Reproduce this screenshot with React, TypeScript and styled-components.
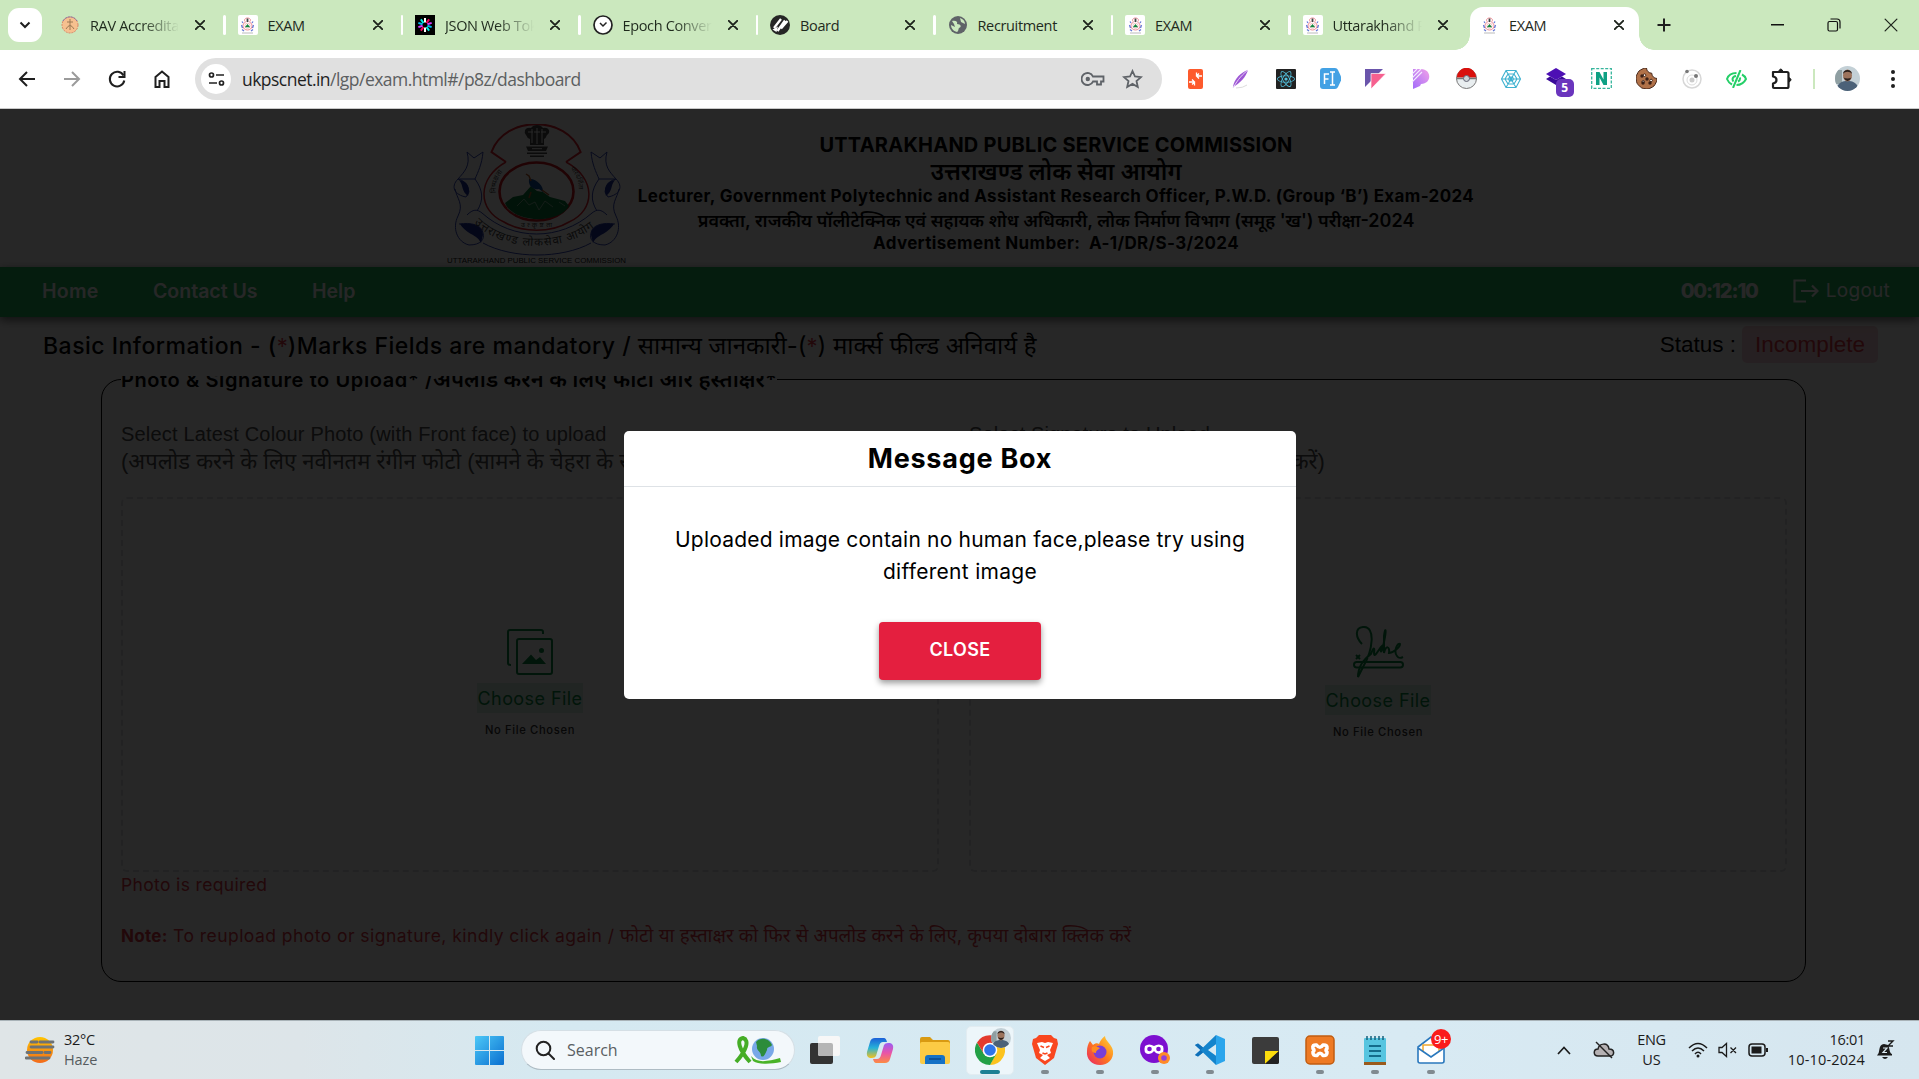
import React from "react";
import styled, { createGlobalStyle, css } from "styled-components";
import { FaReact, FaCookieBite } from "react-icons/fa";

const POPPINS = `Inter, "Noto Sans", "Noto Sans Devanagari", sans-serif`;
const ARIAL = `"Liberation Sans", "Noto Sans", sans-serif`;
const SEGOE = `"Open Sans", "Noto Sans", sans-serif`;

const GlobalStyle = createGlobalStyle`
  * { box-sizing: border-box; }
  html, body { margin: 0; padding: 0; overflow: hidden; }
  body { font-family: ${POPPINS}; background: #fff; color: #000; }
  svg { display: block; flex: none; }
`;

const Screen = styled.div`
  width: 1919px;
  height: 1079px;
  display: flex;
  flex-direction: column;
  overflow: hidden;
`;

interface TypeProps {
  $size: number;
  $weight?: number;
  $spacing?: number;
  $color?: string;
  $family?: string;
}

const Text = styled.span<TypeProps>`
  font-size: ${(p) => p.$size}px;
  font-weight: ${(p) => p.$weight ?? 400};
  letter-spacing: ${(p) => p.$spacing ?? 0}px;
  color: ${(p) => p.$color ?? "inherit"};
  ${(p) => p.$family && css`font-family: ${p.$family};`}
  white-space: pre;
`;

/* ---------- browser tab strip ---------- */

const TabStrip = styled.div`
  height: 50px;
  flex: none;
  display: flex;
  align-items: center;
  background: #cbe8be;
  padding-left: 8px;
  font-family: ${SEGOE};
`;

const TabSearch = styled.div`
  width: 34px;
  height: 34px;
  border-radius: 11px;
  background: #fff;
  display: grid;
  place-items: center;
  margin-right: 6px;
`;

const Tab = styled.div`
  width: 177.5px;
  height: 34px;
  display: flex;
  align-items: center;
  padding-left: 12px;
`;

const TabDivider = styled.i`
  width: 3px;
  height: 20px;
  border-radius: 2px;
  background: #fff;
  margin-left: 18px;
`;

const ActiveTab = styled.div`
  width: 169px;
  height: 43px;
  align-self: flex-end;
  display: flex;
  align-items: center;
  padding: 0 0 7px 9px;
  margin-left: 2px;
  border-radius: 13px 13px 0 0;
  background: #fff;
  position: relative;
  &::before, &::after {
    content: "";
    position: absolute;
    bottom: 0;
    width: 15px;
    height: 15px;
  }
  &::before { left: -15px; background: radial-gradient(circle at 0 0, transparent 14.5px, #fff 15px); }
  &::after { right: -15px; background: radial-gradient(circle at 100% 0, transparent 14.5px, #fff 15px); }
`;

const Favicon = styled.span<{ $white?: boolean }>`
  width: 20px;
  height: 20px;
  flex: none;
  display: grid;
  place-items: center;
  border-radius: 2px;
  background: ${(p) => (p.$white ? "#fff" : "transparent")};
`;

const TabTitle = styled.span<{ $fade?: boolean }>`
  width: 89px;
  flex: none;
  margin-left: 10px;
  padding-top: 1px;
  font-size: 14.5px;
  letter-spacing: -0.35px;
  line-height: 22px;
  color: #1f2a1d;
  white-space: nowrap;
  overflow: hidden;
  ${(p) => p.$fade && css`mask-image: linear-gradient(90deg, #000 58%, transparent 100%);`}
`;

const CloseSlot = styled.span`
  margin-left: 16px;
  display: grid;
`;

const NewTab = styled.span`
  margin-left: 18px;
  width: 16px;
`;

const WindowButtons = styled.div`
  margin-left: auto;
  width: 170px;
  display: flex;
  align-items: center;
  justify-content: space-between;
  padding: 0 21px 0 22px;
`;

/* ---------- toolbar ---------- */

const Toolbar = styled.div`
  height: 59px;
  flex: none;
  display: flex;
  align-items: center;
  background: #fff;
  border-bottom: 1px solid #c9c9c9;
  padding: 0 0 1px 15px;
  font-family: ${SEGOE};
`;

const NavIcons = styled.div`
  display: flex;
  gap: 21px;
  margin-right: 21px;
`;

const Omnibox = styled.div`
  width: 967px;
  height: 42px;
  border-radius: 21px;
  background: #e0e0e0;
  display: flex;
  align-items: center;
  padding: 0 19px 0 6px;
`;

const SiteInfo = styled.span`
  width: 30px;
  height: 30px;
  border-radius: 50%;
  background: #fff;
  display: grid;
  place-items: center;
  margin-right: 11px;
`;

const OmniActions = styled.span`
  margin-left: auto;
  display: flex;
  align-items: center;
  gap: 17px;
`;

const Extensions = styled.div`
  display: flex;
  margin-left: 11px;
`;

const ExtSlot = styled.span`
  width: 45.1px;
  height: 40px;
  display: grid;
  place-items: center;
  position: relative;
`;

const ExtBadge = styled.b`
  position: absolute;
  left: 22px;
  top: 20px;
  width: 18px;
  height: 18px;
  border-radius: 5px;
  background: #6a35bd;
  color: #fff;
  font-size: 12px;
  line-height: 18px;
  text-align: center;
`;

const ToolbarEnd = styled.div`
  display: flex;
  align-items: center;
  gap: 20px;
  margin-left: 9px;
`;

const EndRule = styled.i`
  width: 2px;
  height: 20px;
  background: #cbe8be;
`;

/* ---------- web page ---------- */

const Page = styled.main`
  height: 911px;
  flex: none;
  position: relative;
  display: flex;
  flex-direction: column;
  background: #fff;
  overflow: hidden;
`;

const Banner = styled.header`
  height: 158px;
  flex: none;
  display: flex;
  padding: 15px 0 0 447px;
`;

const BannerText = styled.div`
  width: 838px;
  margin-left: 10px;
  padding-top: 7px;
  display: flex;
  flex-direction: column;
  align-items: center;
`;

const BannerLine = styled.div<{ $h: number }>`
  height: ${(p) => p.$h}px;
  display: flex;
  align-items: center;
  justify-content: center;
`;

const NavBar = styled.nav`
  height: 50px;
  flex: none;
  display: flex;
  align-items: center;
  padding: 0 29px 3px 42px;
  background: #20b45f;
  color: #fff;
  box-shadow: 0 3px 9px rgba(0, 0, 0, 0.6);
  z-index: 1;
`;

const NavItem = styled.span<{ $w: number }>`
  width: ${(p) => p.$w}px;
  flex: none;
`;

const NavRight = styled.div`
  margin-left: auto;
  display: flex;
  align-items: center;
`;

const TitleRow = styled.div`
  height: 59px;
  flex: none;
  display: flex;
  justify-content: space-between;
  align-items: center;
  padding: 0 41px 4px 43px;
`;

const Status = styled.div`
  display: flex;
  align-items: center;
  gap: 6px;
`;

const StatusTag = styled.span`
  width: 136px;
  height: 37px;
  border-radius: 5px;
  background: #f8d3da;
  display: grid;
  place-items: center;
`;

const Scroller = styled.section`
  flex: 1;
  min-height: 0;
  overflow: hidden;
  background: #fafafa;
  padding: 0 76px;
`;

const Sheet = styled.div`
  height: 100%;
  background: #fff;
  padding: 3px 37px 0 25px;
`;

const Fieldset = styled.div`
  height: 603px;
  border: 1px solid #000;
  border-radius: 20px;
  padding: 0 19px;
`;

const Legend = styled.div`
  width: fit-content;
  height: 26px;
  line-height: 27px;
  margin-top: -14px;
  background: #fff;
`;

const Columns = styled.div`
  display: grid;
  grid-template-columns: 818px 818px;
  gap: 30px;
  margin-top: 28px;
`;

const FieldLabel = styled.div`
  height: 57px;
  line-height: 28px;
  color: #4d4d4d;
`;

const LabelLine = styled.div`
  height: 28px;
`;

const DropZone = styled.div<{ $top: number }>`
  margin-top: 20px;
  height: 375px;
  border: 2px dashed #dcdfe3;
  border-radius: 6px;
  display: flex;
  flex-direction: column;
  align-items: center;
  padding-top: ${(p) => p.$top}px;
`;

const ChooseWrap = styled.div<{ $gap: number }>`
  margin-top: ${(p) => p.$gap}px;
  display: flex;
  flex-direction: column;
  align-items: center;
`;

const ChooseTag = styled.span`
  width: 106px;
  height: 30px;
  background: #d9f0e5;
  display: grid;
  place-items: center;
`;

const NoFile = styled.div`
  margin-top: 6px;
  height: 18px;
  line-height: 18px;
`;

const ErrorLine = styled.div`
  height: 28px;
  line-height: 26px;
`;

const NoteLine = styled.div`
  margin-top: 23px;
  height: 28px;
  line-height: 26px;
`;

const Overlay = styled.div`
  position: absolute;
  inset: 0;
  background: rgba(0, 0, 0, 0.846);
  z-index: 2;
`;

const Dialog = styled.div`
  position: absolute;
  left: 624px;
  top: 322px;
  width: 672px;
  height: 268px;
  border-radius: 5px;
  background: #fff;
  z-index: 3;
  display: flex;
  flex-direction: column;
  align-items: center;
`;

const DialogTitle = styled.div`
  width: 100%;
  height: 56px;
  border-bottom: 1px solid #dee2e6;
  display: grid;
  place-items: center;
`;

const DialogBody = styled.div`
  margin-top: 37px;
  display: flex;
  flex-direction: column;
  align-items: center;
  line-height: 32px;
`;

const CloseButton = styled.button`
  margin-top: 34px;
  width: 162px;
  height: 58px;
  border: 0;
  border-radius: 4px;
  background: #e41f3f;
  color: #fff;
  font-family: inherit;
  box-shadow: 0 3px 6px rgba(0, 0, 0, 0.4);
  padding-bottom: 4px;
`;

/* ---------- taskbar ---------- */

const Taskbar = styled.footer`
  height: 59px;
  flex: none;
  display: flex;
  align-items: center;
  border-top: 1px solid #a9b3b8;
  background: linear-gradient(90deg, #dfe5e7 0, #dde5e9 300px, #d5e9f1 560px, #d8eaf3 1400px, #d6e6ef 1919px);
  font-family: ${SEGOE};
  color: #1b1b1b;
`;

const Weather = styled.div`
  width: 450px;
  display: flex;
  align-items: center;
  gap: 8px;
  margin-left: 25px;
  line-height: 20px;
`;

const Stack = styled.div<{ $align?: string }>`
  display: flex;
  flex-direction: column;
  align-items: ${(p) => p.$align ?? "flex-start"};
  line-height: 20px;
`;

const SearchBox = styled.div`
  width: 274px;
  height: 40px;
  margin-left: 17px;
  border-radius: 20px;
  background: #f3f8fb;
  border: 1px solid #d5dfe5;
  border-bottom-color: #aebcc4;
  display: flex;
  align-items: center;
  padding: 0 11px 0 13px;
`;

const SearchWord = styled.span`
  margin-left: 12px;
  font-size: 16px;
  letter-spacing: 0;
  color: #5a5f63;
  flex: 1;
`;

const Apps = styled.div`
  display: flex;
  margin-left: 2px;
`;

const AppSlot = styled.span<{ $active?: boolean; $dot?: boolean }>`
  width: 55.1px;
  height: 58px;
  display: grid;
  place-items: center;
  position: relative;
  ${(p) =>
    p.$dot &&
    css`
      &::after {
        content: "";
        position: absolute;
        bottom: 5px;
        left: calc(50% - ${p.$active ? 10 : 4}px);
        width: ${p.$active ? 20 : 8}px;
        height: 4px;
        border-radius: 2px;
        background: ${p.$active ? "#1c8094" : "#808a90"};
      }
    `}
  ${(p) =>
    p.$active &&
    css`
      &::before {
        content: "";
        position: absolute;
        inset: 5px 3px 4px 4px;
        border-radius: 5px;
        background: #edf6fa;
        border: 1px solid #e2ecf1;
      }
    `}
`;

const MailBadge = styled.span`
  position: absolute;
  left: 28px;
  top: 8px;
  width: 20px;
  height: 20px;
  border-radius: 50%;
  background: #fa1b1b;
  color: #fff;
  font-size: 13px;
  line-height: 20px;
  text-align: center;
  letter-spacing: -0.5px;
`;

const Tray = styled.div`
  margin-left: auto;
  display: flex;
  align-items: center;
  padding-right: 24px;
`;

const TraySlot = styled.span<{ $l: number }>`
  margin-left: ${(p) => p.$l}px;
`;

/* ---------- drawings ---------- */

const Emblem = ({ w, h }: { w: number; h: number }) => (
  <svg width={w} height={h} viewBox="0 0 180 140" preserveAspectRatio="none" fill="none">
    <path d="M59 38 L44.500 28 C58 -9 120 -9 133.600 28 L119 38" stroke="#e0232e" strokeWidth="2" />
    <path d="M59 38 C30 54 30 86 57 98 C75 109 104 109 122 98 C149 86 149 54 119 38" stroke="#e0232e" strokeWidth="1.500" />
    <ellipse cx="89.500" cy="67.500" rx="37" ry="29" stroke="#d0141e" strokeWidth="2.600" />
    <path d="M58 79 L66 73 L76 71 L84 62 L90 67 L96 68 L103 73 L118 77 L122 82 C113 100 66 100 58 79Z" fill="#0a7a3c" />
    <path d="M70 82 l7 -7 l5 6 l6 -3 l4 8 l6 -9 l8 6 M60 84 l8 6 M112 78 l6 4" stroke="#9fc7ae" strokeWidth=".8" />
    <path d="M82 55 C89 54 97 62 96 68 L92 65 C86 66 81 62 82 55Z" fill="#0f4fa0" />
    <path d="M79 50 l3 2 l2 5 M95 66 l7 5 M84 68 l-2 6" stroke="#b55a28" strokeWidth="1.500" />
    <g fill="#4a4a4a">
      <path d="M78 6 Q80 3 84 4 Q86 1 90 1 Q94 1 96 4 Q100 3 102 6 Q103 9 100 11 Q99 14 97 15 L97 21 H83 L83 15 Q80 14 79 11 Q77 9 78 6Z" />
      <path d="M79 22.500 H101 L99 27 H81Z M80 28.500 H100 V30 H80Z M83 31.500 H97 V33 H83Z" />
    </g>
    <path d="M85 5 V19 M90 4 V20 M95 5 V19 M81 8 h5 M94 8 h5 M87 8 h6 M85 24.700 h10" stroke="#fff" strokeWidth="1" />
    <g stroke="#3346b8" strokeWidth="1">
      <path d="M20 28 L27 34 L36 28 C35 40 31 48 28 55 L11 55 C17 48 24 42 20 28Z M28 55 C36 66 37 76 30 87 M11 55 C3 63 8 71 19 73 L22 68 C21 62 19 57 11 55 M8 65 C10 75 17 80 11 92 C5 104 10 118 22 121 C34 121 38 115 36 109 C35 101 24 98 12 100" />
      <path d="M160 28 L153 34 L144 28 C145 40 149 48 152 55 L169 55 C163 48 156 42 160 28Z M152 55 C144 66 143 76 150 87 M169 55 C177 63 172 71 161 73 L158 68 C159 62 161 57 169 55 M172 65 C170 75 163 80 169 92 C175 104 170 118 158 121 C146 121 142 115 144 109 C145 101 156 98 168 100" />
      <path d="M20 91 C26 85 30 85 35 89 C66 117 113 117 145 89 C150 85 154 85 160 91" />
      <path d="M36 119 C65 135 115 135 144 119" />
    </g>
    <path d="M12 56 C20 57 24 63 21 72 C14 67 17 62 12 56Z M168 56 C160 57 156 63 159 72 C166 67 163 62 168 56Z M13 100 C26 98 36 102 36 111 L34 119 C30 110 20 111 13 100Z M167 100 C154 98 144 102 144 111 L146 119 C150 110 160 111 167 100Z" fill="#1c2f9c" />
    <defs>
      <path id="motto" d="M27 99 C57 130 123 130 154 97" />
      <path id="left-word" d="M49 69 C48 60 51 52 59 44" />
      <path id="right-word" d="M123 45 C131 53 133 61 131 72" />
    </defs>
    <g fill="#444" fontFamily={POPPINS}>
      <text fontSize="11.500"><textPath href="#motto" textLength="130">उत्तराखण्ड लोकसेवा आयोग</textPath></text>
      <text fontSize="7"><textPath href="#left-word">निष्पक्षता</textPath></text>
      <text fontSize="6.500"><textPath href="#right-word">पारदर्शिता</textPath></text>
      <text x="74" y="103" fontSize="7" textLength="31">उत्कृष्टता</text>
      <text x="0" y="138.500" fontSize="6.500" textLength="179" lengthAdjust="spacingAndGlyphs" fontFamily={ARIAL} fill="#222">UTTARAKHAND PUBLIC SERVICE COMMISSION</text>
    </g>
  </svg>
);

const MiniEmblem = () => (
  <svg width="17" height="17" viewBox="0 0 17 17" fill="none">
    <path d="M8.500 1 C5 1 5 4 6.500 5 C2.500 7 3.500 13 8.500 13 C13.500 13 14.500 7 10.500 5 C12 4 12 1 8.500 1Z" stroke="#f08a94" strokeWidth="1" />
    <path d="M8.500 1.500 V5" stroke="#444" strokeWidth="1.800" />
    <circle cx="8.500" cy="8.800" r="2.600" fill="#fff" stroke="#eda0a0" strokeWidth=".6" />
    <path d="M5.800 10.200 L8.500 7 L11.200 10.200Z" fill="#12843d" />
    <path d="M3 4.500 L4 6 M14 4.500 L13 6 M2.500 8 L3.500 11 M14.500 8 L13.500 11 M3 12.500 L5 14 M14 12.500 L12 14" stroke="#6478d6" strokeWidth="1.300" />
    <path d="M3 16 H14" stroke="#aaa" strokeWidth=".8" />
  </svg>
);

const Cross = ({ s = 10, w = 1.9 }: { s?: number; w?: number }) => (
  <svg width={s} height={s} viewBox="0 0 10 10" stroke="#1d231c" strokeWidth={w} strokeLinecap="round"><path d="M.8 .8 L9.200 9.200 M9.200 .8 L.8 9.200" /></svg>
);

const RavIcon = () => (
  <svg width="18" height="18" viewBox="0 0 18 18" fill="none">
    <circle cx="9" cy="9" r="8" fill="#f6c08f" stroke="#d88768" strokeDasharray="2 1" />
    <path d="M2 5 A8 8 0 0 1 16 5" stroke="#7b63a6" strokeDasharray="2 1" />
    <path d="M9 3 V14 M6 6 h6 M5 13 q4 -7 8 0" stroke="#9c7a54" />
  </svg>
);

const JwtIcon = () => (
  <svg width="20" height="20" viewBox="0 0 20 20">
    <rect width="20" height="20" fill="#000" />
    <g strokeWidth="2" transform="translate(10 10)">
      {["#fff", "#fb015b", "#d63aff", "#00b9f1", "#00f2e6", "#fff", "#fb015b", "#d63aff", "#00b9f1", "#00f2e6"].map((c, i) => (
        <path key={i} d="M0 -2.500 V-7" stroke={c} transform={`rotate(${i * 36})`} />
      ))}
    </g>
  </svg>
);

const ClockIcon = () => (
  <svg width="20" height="20" viewBox="0 0 20 20" fill="none" stroke="#222"><circle cx="10" cy="10" r="9" fill="#fff" strokeWidth="1.700" /><path d="M7 8 L10 11 L13.500 7.500" strokeWidth="1.500" /></svg>
);

const BoardIcon = () => (
  <svg width="20" height="20" viewBox="0 0 20 20"><circle cx="10" cy="10" r="10" fill="#262626" /><path d="M4 13 L11 4 M7.500 16 L15 5.500 M11 13.500 L17.500 6" stroke="#fff" strokeWidth="2.300" /><path d="M2.500 14.500 L8 11.500 L6.500 17Z" fill="#fff" /></svg>
);

const GlobeIcon = () => (
  <svg width="18" height="18" viewBox="0 0 18 18"><circle cx="9" cy="9" r="9" fill="#5f6368" /><path d="M3 5 C7 4 9 6 8 8 C12 8 13 11 10 12 C9 13 10 15 8 16 C4 15 2 12 2 9 L6 11 L5 8Z M11 2 C14 3 16 5 16 8 L12 6Z" fill="#cbe8be" /></svg>
);

const Avatar = ({ s }: { s: number }) => (
  <svg width={s} height={s} viewBox="0 0 25 25">
    <clipPath id={`face${s}`}><circle cx="12.500" cy="12.500" r="12.500" /></clipPath>
    <g clipPath={`url(#face${s})`}>
      <rect width="25" height="25" fill="#c3d0d6" />
      <path d="M0 4 h7 v14 h-7z" fill="#8f9fa2" />
      <path d="M1 25 C2 16 8 15 12.500 15 C17 15 23 16 24 25Z" fill="#4b6178" />
      <ellipse cx="12.500" cy="9.500" rx="4.500" ry="6" fill="#9c735c" />
      <path d="M8 8 C8 2.500 17 2.500 17 8 C15 5 10 5 8 8Z M8.500 11.500 q4 7 8 0 q-4 2 -8 0z" fill="#2b211d" />
    </g>
  </svg>
);

const BackIcon = ({ color = "#1f1f1f", flip = false }: { color?: string; flip?: boolean }) => (
  <svg width="24" height="24" viewBox="0 0 24 24" fill="none" stroke={color} strokeWidth="2" transform={flip ? "scale(-1 1)" : undefined}><path d="M20 12 H5.500 M12 5 L5 12 L12 19" /></svg>
);

const extIcons: React.ReactNode[] = [
  <svg width="15" height="20" viewBox="0 0 15 20"><rect width="15" height="20" rx="2" fill="#fd5a2c" /><path d="M14 7 H8.500 M11 4.500 L8.500 7 L11 9.500 M8.500 7 V3.500 M1 13 H6.500 M4 10.500 L6.500 13 L4 15.500 M6.500 13 V16.500" stroke="#fff" strokeWidth="1.300" fill="none" /></svg>,
  <svg width="18" height="20" viewBox="0 0 18 20"><path d="M1 18 C2 10 9 3 16 1 C14 8 8 14 1 18Z" fill="#9d57d5" /><path d="M1 19 C6 10 11 5 16 1" stroke="#e9d4f6" strokeWidth="1" fill="none" /><path d="M4 19 Q11 19 15 16" stroke="#ddd" fill="none" /></svg>,
  <svg width="20" height="20" viewBox="0 0 20 20"><rect width="20" height="20" rx="1" fill="#222" /><FaReact x="1" y="1" size={18} color="#53c1de" /></svg>,
  <svg width="21" height="21" viewBox="0 0 21 21"><path d="M3 0 H15 Q17 0 18 2 L21 8.500 V12.500 L18 19 Q17 21 15 21 H3 Q0 21 0 18 V3 Q0 0 3 0Z" fill="#43a1e4" /><path d="M4.500 16 V6 H9 M4.500 11 H8.500 M10 4 H15 M12.500 4 V17 M10 17 H15" stroke="#fff" strokeWidth="1.500" fill="none" /></svg>,
  <svg width="21" height="20" viewBox="0 0 21 20"><path d="M0 0 H18 L0 18Z" fill="#6a55ab" /><path d="M6 4.500 H21 L6 20Z" fill="#f6608f" stroke="#fff" strokeWidth=".7" /></svg>,
  <svg width="18" height="20" viewBox="0 0 18 20"><defs><linearGradient id="pg" x1="0" y1="1" x2="1" y2="0"><stop stopColor="#a26cfa" /><stop offset="1" stopColor="#f2a1e8" /></linearGradient></defs><path d="M1 0 H9 C20 0 20 15 9 15 L8 17 L1 20Z" fill="url(#pg)" /><path d="M0 5 L5 0 M0 9 L9 0 M0 13 L10 3" stroke="#f3ebff" strokeWidth="1.200" /></svg>,
  <svg width="21" height="21" viewBox="0 0 21 21"><circle cx="10.500" cy="10.500" r="10" fill="#e9eef0" stroke="#777" /><path d="M.8 9.500 A9.700 9.700 0 0 1 20.200 9.500Z" fill="#d9100c" /><path d="M.5 10.500 h20" stroke="#777" strokeWidth="1.500" /><circle cx="10.500" cy="10.500" r="3" fill="#ccd4d6" stroke="#667" strokeWidth="1" /></svg>,
  <svg width="20" height="20" viewBox="0 0 20 20" fill="none" stroke="#3fb2d0" strokeWidth="1.100"><path d="M5 1.500 H15 L19.500 10 L15 18.500 H5 L.5 10Z M7 5 H13 L16 10 L13 15 H7 L4 10Z M8.500 8 h3 l1 2 l-1 2 h-3 l-1 -2z M5 1.500 L15 18.500 M15 1.500 L5 18.500 M.5 10 H19.500" /></svg>,
  <><svg width="22" height="22" viewBox="0 0 22 22"><path d="M11 0 L21 6 L11 12 L1 6Z" fill="#4d0fb4" /><path d="M1 11 L5 8.500 L11 12 L17 8.500 L21 11 L11 17Z" fill="#3a0a99" /></svg><ExtBadge>5</ExtBadge></>,
  <svg width="21" height="21" viewBox="0 0 21 21" fill="none"><rect x=".7" y=".7" width="19.600" height="19.600" stroke="#36b59c" strokeWidth="1.300" strokeDasharray="3 1.500" /><path d="M5 17 V4 H8.500 L12.500 11.500 V4 H16 V17 H12.500 L8.500 9.500 V17Z" fill="#0ea083" /></svg>,
  <svg width="21" height="21" viewBox="0 0 21 21"><FaCookieBite size={21} color="#b07148" stroke="#432416" strokeWidth={24} /><g fill="#3b2016"><circle cx="6" cy="8" r="1.700" /><circle cx="11" cy="11" r="1.700" /><circle cx="7" cy="15" r="1.700" /><circle cx="14" cy="15" r="1.700" /></g></svg>,
  <svg width="20" height="20" viewBox="0 0 20 20" fill="none"><circle cx="10" cy="10" r="9" stroke="#d7d7d7" strokeWidth="1.500" /><circle cx="10" cy="11" r="5" stroke="#dcdcdc" /><circle cx="10" cy="11" r="2.500" fill="#ccc" /><circle cx="5" cy="2.500" r="1.800" fill="#777" /><circle cx="14" cy="7" r="2" fill="#777" /></svg>,
  <svg width="21" height="18" viewBox="0 0 21 18" fill="none" stroke="#25cf68" strokeWidth="2"><path d="M10.500 3 C5 3 2 6 1 9 C2 11.500 4 13.500 6 14.500 M16 4.500 C18 5.500 19.500 7.500 20 9 C18 13 15 15 10.500 15 M14.500 0 L7 18 M10 6 C6 6.500 6 10 7.500 11.500 M14 7.500 q.5 3 -2 4" /></svg>,
];

const Puzzle = () => (
  <svg width="23" height="23" viewBox="0 0 23 23" fill="none" stroke="#1f1f1f" strokeWidth="2.200" strokeLinejoin="round"><path d="M3 5 H17 Q18.500 5 18.500 6.500 V19.500 Q18.500 21 17 21 H4 Q3 21 3 20 V16.500 Q6.500 16 6.500 13 Q6.500 10 3 9.500Z" /><path d="M8.500 4.500 q2.300 -5 4.600 0z M18.800 10.500 q4.500 2.200 0 4.600z" fill="#1f1f1f" strokeWidth="1" /></svg>
);

const ChromeMark = styled.svg`
  z-index: 1;
`;

const ChromeLogo = () => (
  <ChromeMark width="30" height="30" viewBox="0 0 30 30">
    <path d="M28 7.500 A15 15 0 0 1 15 30 L21 18.500 L15 8Z" fill="#fcc31e" />
    <path d="M2 7.500 A15 15 0 0 0 15 30 L21.500 18.500 L9 19Z" fill="#23a046" />
    <path d="M2 7.500 L9 19 L15 8 H28 A15 15 0 0 0 2 7.500Z" fill="#e33b2e" />
    <circle cx="15" cy="15" r="7.300" fill="#fff" /><circle cx="15" cy="15" r="5.800" fill="#2f74ea" />
  </ChromeMark>
);

const ChromeAvatar = styled.span`
  position: absolute;
  left: 29px;
  top: 7px;
  z-index: 2;
`;

const WorldRibbon = () => (
  <svg width="50" height="28" viewBox="0 0 50 28" fill="none">
    <circle cx="30" cy="13" r="11" fill="#78a8e8" /><path d="M23 6 C28 0 37 3 39 9 C37 12 34 10 34 14 C32 18 31 22 28 20 C28 15 23 15 24 10Z" fill="#2c8c3b" />
    <path d="M3 26 C13 15 17 4 10 2 C3 3 6 14 17 26" stroke="#45ad26" strokeWidth="4" />
    <path d="M18 20 C25 28 35 25 47 22 L48 26 C38 28 27 29 20 25" fill="#49b328" />
  </svg>
);

const tabs = [
  { title: "RAV Accreditation", icon: <RavIcon />, fade: true },
  { title: "EXAM", icon: <MiniEmblem />, white: true },
  { title: "JSON Web Tokens", icon: <JwtIcon />, fade: true },
  { title: "Epoch Converter", icon: <ClockIcon />, fade: true },
  { title: "Board", icon: <BoardIcon /> },
  { title: "Recruitment", icon: <GlobeIcon /> },
  { title: "EXAM", icon: <MiniEmblem />, white: true },
  { title: "Uttarakhand Public", icon: <MiniEmblem />, white: true, fade: true },
];

const ChooseBlock = ({ gap }: { gap: number }) => (
  <ChooseWrap $gap={gap}>
    <ChooseTag><Text $size={18} $spacing={0.43} $color="#0a8a42">Choose File</Text></ChooseTag>
    <NoFile><Text $size={11.2} $weight={500} $spacing={0.65} $color="#333">No File Chosen</Text></NoFile>
  </ChooseWrap>
);

export default function App() {
  return (
    <Screen>
      <GlobalStyle />
      <TabStrip>
        <TabSearch>
          <svg width="12" height="8" viewBox="0 0 12 8" fill="none" stroke="#1f1f1f" strokeWidth="2"><path d="M1.500 1.500 L6 6 L10.500 1.500" /></svg>
        </TabSearch>
        {tabs.map((t, i) => (
          <Tab key={i}>
            <Favicon $white={t.white}>{t.icon}</Favicon>
            <TabTitle $fade={t.fade}>{t.title}</TabTitle>
            <CloseSlot><Cross /></CloseSlot>
            {i < 7 && <TabDivider />}
          </Tab>
        ))}
        <ActiveTab>
          <Favicon><MiniEmblem /></Favicon>
          <TabTitle>EXAM</TabTitle>
          <CloseSlot><Cross /></CloseSlot>
        </ActiveTab>
        <NewTab><svg width="14" height="14" viewBox="0 0 14 14" stroke="#1f1f1f" strokeWidth="2"><path d="M7 .5 V13.500 M.5 7 H13.500" /></svg></NewTab>
        <WindowButtons>
          <svg width="13" height="2" viewBox="0 0 13 2"><rect width="13" height="1.500" fill="#111" /></svg>
          <svg width="14" height="14" viewBox="0 0 14 14" fill="none" stroke="#111" strokeWidth="1.200"><rect x="1" y="3.500" width="9.500" height="9.500" rx="1.500" /><path d="M3.500 1 H10 Q13 1 13 4 V10.500" /></svg>
          <Cross s={14} w={0.9} />
        </WindowButtons>
      </TabStrip>

      <Toolbar>
        <NavIcons>
          <BackIcon />
          <BackIcon color="#9b9b9b" flip />
          <svg width="24" height="24" viewBox="0 0 24 24" fill="none" stroke="#1f1f1f" strokeWidth="2"><path d="M18.500 8.500 A7.300 7.300 0 1 0 19.300 13.500" /><path d="M19.500 4 V10 H13.500" /></svg>
          <svg width="24" height="24" viewBox="0 0 24 24" fill="none" stroke="#1f1f1f" strokeWidth="2"><path d="M5.500 10 L12 4.500 L18.500 10 V20 H14.500 V14 H9.500 V20 H5.500Z" /></svg>
        </NavIcons>
        <Omnibox>
          <SiteInfo>
            <svg width="17" height="14" viewBox="0 0 17 14" fill="none" stroke="#222" strokeWidth="1.700"><circle cx="3.500" cy="3" r="2" /><path d="M8 3 H16 M1 11 H9" /><circle cx="13.500" cy="11" r="2" /></svg>
          </SiteInfo>
          <Text $size={17.5} $spacing={-0.53} $color="#5c5f61"><Text $size={17.5} $spacing={-0.53} $color="#1f1f1f">ukpscnet.in</Text>/lgp/exam.html#/p8z/dashboard</Text>
          <OmniActions>
            <svg width="24" height="16" viewBox="0 0 24 16" fill="none" stroke="#5f6368" strokeWidth="1.800"><path d="M12 5.500 A6 6 0 1 0 12 10.500 H16 V13.500 H20 V10.500 H22.500 V5.500Z" /><circle cx="6.800" cy="8" r="2.200" fill="#5f6368" stroke="none" /></svg>
            <svg width="21" height="20" viewBox="0 0 21 20" fill="none" stroke="#5f6368" strokeWidth="1.800"><path d="M10.500 2 L13 7.500 L19 8.100 L14.500 12 L15.800 18 L10.500 14.900 L5.200 18 L6.500 12 L2 8.100 L8 7.500Z" /></svg>
          </OmniActions>
        </Omnibox>
        <Extensions>
          {extIcons.map((icon, i) => <ExtSlot key={i}>{icon}</ExtSlot>)}
          <ExtSlot><Puzzle /></ExtSlot>
        </Extensions>
        <ToolbarEnd>
          <EndRule />
          <Avatar s={25} />
          <svg width="24" height="18" viewBox="0 0 24 18" fill="#1f1f1f"><circle cx="13" cy="2" r="2" /><circle cx="13" cy="9" r="2" /><circle cx="13" cy="16" r="2" /></svg>
        </ToolbarEnd>
      </Toolbar>

      <Page>
        <Banner>
          <Emblem w={180} h={140} />
          <BannerText>
            <BannerLine $h={27}><Text $size={20} $weight={700} $spacing={0.24}>UTTARAKHAND PUBLIC SERVICE COMMISSION</Text></BannerLine>
            <BannerLine $h={26}><Text $size={23.6} $weight={600}>उत्तराखण्ड लोक सेवा आयोग</Text></BannerLine>
            <BannerLine $h={24}><Text $size={17} $weight={700} $spacing={0.36}>Lecturer, Government Polytechnic and Assistant Research Officer, P.W.D. (Group ‘B’) Exam-2024</Text></BannerLine>
            <BannerLine $h={24}><Text $size={18} $weight={600}>प्रवक्ता, राजकीय पॉलीटेक्निक एवं सहायक शोध अधिकारी, लोक निर्माण विभाग (समूह 'ख') परीक्षा-2024</Text></BannerLine>
            <BannerLine $h={21}><Text $size={17} $weight={700} $spacing={0.35}>Advertisement Number:  A-1/DR/S-3/2024</Text></BannerLine>
          </BannerText>
        </Banner>
        <NavBar>
          <NavItem $w={111}><Text $size={19.5} $weight={600} $spacing={0.3}>Home</Text></NavItem>
          <NavItem $w={159}><Text $size={19.5} $weight={600}>Contact Us</Text></NavItem>
          <NavItem $w={60}><Text $size={19.5} $weight={600}>Help</Text></NavItem>
          <NavRight>
            <Text $size={20} $weight={800} $spacing={-1.1}>00:12:10</Text>
            <TraySlot $l={35}><svg width="26" height="24" viewBox="0 0 26 24" fill="none" stroke="#fff" strokeWidth="2.200"><path d="M13 1.500 H1.500 V22.500 H13 M8 12 H24 M19 6.500 L24.500 12 L19 17.500" /></svg></TraySlot>
            <TraySlot $l={7}><Text $size={19} $spacing={0.25}>Logout</Text></TraySlot>
          </NavRight>
        </NavBar>
        <TitleRow>
          <span>
            <Text $size={23} $weight={500} $spacing={0.5}>Basic Information - (<Text $size={22} $color="#dc3545">*</Text>)Marks Fields are mandatory / </Text>
            <Text $size={24}>सामान्य जानकारी-(<Text $size={22} $color="#dc3545">*</Text>) मार्क्स फील्ड अनिवार्य है</Text>
          </span>
          <Status>
            <Text $size={22.5} $family={ARIAL}>Status :</Text>
            <StatusTag><Text $size={22.5} $family={ARIAL} $color="#dc3545">Incomplete</Text></StatusTag>
          </Status>
        </TitleRow>
        <Scroller>
          <Sheet>
            <Fieldset>
              <Legend>
                <Text $size={20} $weight={600} $spacing={0.6}>Photo &amp; Signature to Upload* /</Text>
                <Text $size={21.9} $weight={600}>अपलोड करने के लिए फोटो और हस्ताक्षर*</Text>
              </Legend>
              <Columns>
                <div>
                  <FieldLabel>
                    <LabelLine><Text $size={20} $spacing={0.18} $family={ARIAL}>Select Latest Colour Photo (with Front face) to upload</Text></LabelLine>
                    <LabelLine><Text $size={22} $family={ARIAL}>(अपलोड करने के लिए नवीनतम रंगीन फोटो (सामने के चेहरा के साथ) का चयन करें)</Text></LabelLine>
                  </FieldLabel>
                  <DropZone $top={130}>
                    <svg width="46" height="46" viewBox="0 0 46 46" fill="none" stroke="#0a8a42" strokeWidth="2"><path d="M36 5 V3 Q36 1 34 1 H3 Q1 1 1 3 V34 Q1 36 4 36" /><rect x="10" y="10" width="35" height="35" rx="2" /><path d="M15 35 L24 25.500 L29 31 L33 28 L39 35Z" fill="#0a8a42" stroke="none" /><circle cx="34.500" cy="21.500" r="2.500" fill="#0a8a42" stroke="none" /></svg>
                    <ChooseBlock gap={8} />
                  </DropZone>
                </div>
                <div>
                  <FieldLabel>
                    <LabelLine><Text $size={20} $spacing={0.12} $family={ARIAL}>Select Signature to Upload</Text></LabelLine>
                    <LabelLine><Text $size={21.9} $family={ARIAL}>(अपलोड करने के लिए हस्ताक्षर का चयन करें)</Text></LabelLine>
                  </FieldLabel>
                  <DropZone $top={127}>
                    <svg width="51" height="53" viewBox="0 0 51 53" fill="none" stroke="#0a8a42" strokeWidth="2"><path d="M9 18 C3 12 1 2 10 1 C23 0 20 24 10 41 L5 51 C5 40 11 33 18 28 C20 22 22 20 21 27 C21 33 26 23 28 21 C27 28 29 27 31 16 C34 2 32 1 31 10 L31 27 C33 19 37 20 36 27 C39 27 47 22 47 18 C45 16 40 25 44 30 C46 33 48 32 50 31" /><rect x="1" y="36" width="49" height="5.500" rx="2.700" /><path d="M3 29 l4 4 m0 -4 l-4 4" /></svg>
                    <ChooseBlock gap={6} />
                  </DropZone>
                </div>
              </Columns>
              <ErrorLine><Text $size={17.5} $spacing={0.35} $color="#dc3545">Photo is required</Text></ErrorLine>
              <NoteLine>
                <Text $size={17} $weight={700} $spacing={0.3} $color="#dc3545">Note:</Text>
                <Text $size={17.5} $spacing={0.45} $color="#dc3545"> To reupload photo or signature, kindly click again / </Text>
                <Text $size={18.75} $color="#dc3545">फोटो या हस्ताक्षर को फिर से अपलोड करने के लिए, कृपया दोबारा क्लिक करें</Text>
              </NoteLine>
            </Fieldset>
          </Sheet>
        </Scroller>
        <Overlay />
        <Dialog role="dialog">
          <DialogTitle><Text $size={27} $weight={700} $spacing={0.75}>Message Box</Text></DialogTitle>
          <DialogBody>
            <Text $size={21} $spacing={0.2}>Uploaded image contain no human face,please try using</Text>
            <Text $size={21} $spacing={0.3}>different image</Text>
          </DialogBody>
          <CloseButton><Text $size={18} $weight={600} $spacing={0.35}>CLOSE</Text></CloseButton>
        </Dialog>
      </Page>

      <Taskbar>
        <Weather>
          <svg width="31" height="28" viewBox="0 0 31 28"><defs><linearGradient id="sun" x1="0" y1="0" x2="0" y2="1"><stop stopColor="#ffc400" /><stop offset="1" stopColor="#f26a1c" /></linearGradient></defs><circle cx="15" cy="14" r="13" fill="url(#sun)" /><path d="M6 6 H12 M15 6 H28 M6 11 H28 M2 16.500 H17 M20 16.500 H25 M1 22 H24" stroke="#6d7275" strokeWidth="2.800" strokeLinecap="round" /></svg>
          <Stack><Text $size={14.5} $spacing={-0.3}>32°C</Text><Text $size={14.5} $spacing={-0.1} $color="#565b5e">Haze</Text></Stack>
        </Weather>
        <svg width="29" height="29" viewBox="0 0 29 29"><defs><linearGradient id="win" x1="0" y1="0" x2="1" y2="1"><stop stopColor="#4cc8f7" /><stop offset="1" stopColor="#0a6fd0" /></linearGradient></defs><path d="M0 1 Q0 0 1 0 H14 V14 H0Z M15 0 H28 Q29 0 29 1 V14 H15Z M0 15 H14 V29 H1 Q0 29 0 28Z M15 15 H29 V28 Q29 29 28 29 H15Z" fill="url(#win)" /></svg>
        <SearchBox>
          <svg width="20" height="20" viewBox="0 0 20 20" fill="none" stroke="#222" strokeWidth="2"><circle cx="8.500" cy="8.500" r="6.800" /><path d="M13.500 13.500 L19 19" strokeLinecap="round" /></svg>
          <SearchWord>Search</SearchWord>
          <WorldRibbon />
        </SearchBox>
        <Apps>
          <AppSlot><svg width="30" height="28" viewBox="0 0 30 28"><rect y="7" width="23" height="21" rx="2" fill="#333" /><rect x="8" width="22" height="20" rx="2" fill="#f7f7f7" /><path d="M8 7 H21 Q23 7 23 9 V20 H10 Q8 20 8 18Z" fill="#b5b5b5" /></svg></AppSlot>
          <AppSlot><svg width="28" height="27" viewBox="0 0 28 27"><defs><linearGradient id="c1" x1="0" y1="0" x2="0" y2="1"><stop stopColor="#1b5fd8" /><stop offset=".5" stopColor="#27b3d8" /><stop offset="1" stopColor="#f4c11c" /></linearGradient><linearGradient id="c2" x1="0" y1="0" x2="0" y2="1"><stop stopColor="#9a5cf4" /><stop offset=".5" stopColor="#e954a8" /><stop offset="1" stopColor="#fd8b43" /></linearGradient></defs><path d="M9 1 H18 Q20 1 21 5 H17 Q14 5 13 9 L10 19 Q9 21 6 21 H4 Q0 20 1 15 L4 5 Q5 1 9 1Z" fill="url(#c1)" /><path d="M19 26 H10 Q8 26 7 22 H11 Q14 22 15 18 L18 8 Q19 6 22 6 H24 Q28 7 27 12 L24 22 Q23 26 19 26Z" fill="url(#c2)" /></svg></AppSlot>
          <AppSlot><svg width="30" height="27" viewBox="0 0 30 27"><path d="M0 2 Q0 0 2 0 H10 L13 3 H28 Q30 3 30 5 V12 H0Z" fill="#d99a12" /><rect y="5" width="30" height="22" rx="2" fill="#fccb45" /><path d="M5 27 V21 Q5 18 8 18 H22 Q25 18 25 21 V27Z" fill="#1672c6" /><path d="M9 22 h12" stroke="#0a4a8c" strokeWidth="1.500" /></svg></AppSlot>
          <AppSlot $active $dot><ChromeLogo /><ChromeAvatar><Avatar s={20} /></ChromeAvatar></AppSlot>
          <AppSlot $dot><svg width="26" height="30" viewBox="0 0 26 30"><path d="M7 0 H19 L22 3 L25 4 L26 9 L22 23 L13 30 L4 23 L0 9 L1 4 L4 3Z" fill="#f9471f" /><path d="M5 8 L10 7 L13 8 L16 7 L21 8 L18 15 L19 18 L15 20 L18 23 L13 26 L8 23 L11 20 L7 18 L8 15Z" fill="#fff" /><path d="M8.500 11 l3.500 1.500 M17.500 11 l-3.500 1.500 M10.500 18 l2.500 1 l2.500 -1" stroke="#f9471f" strokeWidth="1.500" fill="none" /></svg></AppSlot>
          <AppSlot $dot><svg width="28" height="29" viewBox="0 0 28 29"><defs><linearGradient id="ff" x1="1" y1="0" x2="0" y2="1"><stop stopColor="#ffdf3c" /><stop offset=".5" stopColor="#ff7a1c" /><stop offset="1" stopColor="#e8206a" /></linearGradient></defs><path d="M4 5 L7 9 C9 7 12 7 13 8 C14 5 16 2 19 0 C19 5 26 8 27 15 C28 23 22 29 14 29 C6 29 0 23 1 15 C1 11 2 8 4 5Z" fill="url(#ff)" /><circle cx="14" cy="16" r="6.500" fill="#7a3fd6" /><path d="M6 11 C9 9 12 11 14 12 C12 14 10 14 10 17 C6 17 5 14 6 11Z" fill="#ff8b1f" /></svg></AppSlot>
          <AppSlot $dot><svg width="30" height="30" viewBox="0 0 30 30"><circle cx="14" cy="14" r="14" fill="#7d0fd0" /><path d="M5 11 Q9 8 14 11 Q19 8 23 11 Q25 18 20 19 Q16 19 14 16 Q12 19 8 19 Q3 18 5 11Z" fill="#fff" /><circle cx="9.500" cy="14" r="2.300" fill="#7d0fd0" /><circle cx="18.500" cy="14" r="2.300" fill="#7d0fd0" /><circle cx="24" cy="23" r="6" fill="#ff8a28" /><circle cx="24" cy="23" r="2.800" fill="#9440dc" /></svg></AppSlot>
          <AppSlot $dot><svg width="30" height="30" viewBox="0 0 30 30"><path d="M21 0 L8 12.500 L3 8.500 L0 10 V20 L3 21.500 L8 17.500 L21 30 L22 21.500 L13 15 L22 8.500Z" fill="#1484cc" /><path d="M0 10 L5.500 15 L0 20Z" fill="#d8eaf3" /><path d="M0 10 L3 8.500 L8 12.500 L5.500 15Z M0 20 L3 21.500 L8 17.500 L5.500 15Z" fill="#0f6fb8" /><path d="M21 0 L30 4 V26 L21 30Z" fill="#2ba5ec" /></svg></AppSlot>
          <AppSlot><svg width="27" height="27" viewBox="0 0 27 27"><rect width="27" height="27" rx="2" fill="#3b3b3b" /><path d="M13 27 V14 H27 Z" fill="#fbdc0d" /><path d="M27 14 V25 Q27 27 25 27 H13Z" fill="#222" /></svg></AppSlot>
          <AppSlot $dot><svg width="30" height="30" viewBox="0 0 30 30"><rect x="1" y="1" width="28" height="28" rx="4" fill="#ee7a24" stroke="#c15c10" strokeWidth="1.500" /><path d="M11.500 10 Q7 9.500 8 13.500 Q10 15 8 17 Q7.500 21 12 20.500 Q15 16 18 20.500 Q22.500 21 22 17 Q20 15 22 13.500 Q22.500 9.500 18 10 Q15 14.500 11.500 10Z" stroke="#fff" strokeWidth="3.600" strokeLinejoin="round" fill="none" /></svg></AppSlot>
          <AppSlot $dot><svg width="24" height="30" viewBox="0 0 24 30"><rect x="1" y="3" width="22" height="25" rx="1" fill="#57c5e0" /><path d="M1 27 H23 V30 H1Z" fill="#9a5a1c" /><path d="M4 1 v4 M8 1 v4 M12 1 v4 M16 1 v4 M20 1 v4" stroke="#14607c" strokeWidth="1.500" /><path d="M6 11 H18 M6 16 H18 M6 21 H18" stroke="#146c8b" strokeWidth="2" /></svg></AppSlot>
          <AppSlot $dot><svg width="28" height="28" viewBox="0 0 28 28" fill="none"><path d="M1 11 L14 1 L27 11 V25 Q27 27 25 27 H3 Q1 27 1 25Z" fill="#fff" stroke="#2a78bd" strokeWidth="1.600" /><path d="M6 16 V9 H22 V16" stroke="#f0a82f" strokeWidth="1.500" /><path d="M1 12 L14 21 L27 12" stroke="#2a78bd" strokeWidth="1.600" /></svg><MailBadge>9+</MailBadge></AppSlot>
        </Apps>
        <Tray>
          <TraySlot $l={0}><svg width="14" height="9" viewBox="0 0 14 9" fill="none" stroke="#1b1b1b" strokeWidth="1.700"><path d="M1 8 L7 1.500 L13 8" /></svg></TraySlot>
          <TraySlot $l={22}><svg width="22" height="18" viewBox="0 0 22 18" fill="none" stroke="#222" strokeWidth="1.500"><path d="M5 15 C0 15 0 8 5 8 C6 2 15 1 16 8 C22 8 22 15 17 15Z" fill="#b5b1b3" /><path d="M3 1 L19 17" /></svg></TraySlot>
          <TraySlot $l={22}><Stack $align="center"><Text $size={14.5} $spacing={-0.3}>ENG</Text><Text $size={14.5}>US</Text></Stack></TraySlot>
          <TraySlot $l={22}><svg width="20" height="16" viewBox="0 0 20 16" fill="none" stroke="#1b1b1b" strokeWidth="1.500"><path d="M1 6 Q10 -3 19 6 M4 9 Q10 3 16 9 M7 12 Q10 8.500 13 12" /><circle cx="10" cy="14" r="1.500" fill="#1b1b1b" stroke="none" /></svg></TraySlot>
          <TraySlot $l={10}><svg width="19" height="16" viewBox="0 0 19 16" fill="none" stroke="#1b1b1b" strokeWidth="1.300"><path d="M1 5.500 H4 L8.500 1.500 V14.500 L4 10.500 H1Z M12.500 5.500 L18 11 M18 5.500 L12.500 11" /></svg></TraySlot>
          <TraySlot $l={11}><svg width="21" height="14" viewBox="0 0 21 14" fill="none"><rect x="1" y="1" width="16" height="12" rx="3" stroke="#1b1b1b" strokeWidth="1.500" /><rect x="3.500" y="3.500" width="10" height="7" fill="#1b1b1b" /><path d="M19 5 V9" stroke="#1b1b1b" strokeWidth="2" /></svg></TraySlot>
          <TraySlot $l={19}><Stack $align="flex-end"><Text $size={14.5} $spacing={-0.3}>16:01</Text><Text $size={14.5} $spacing={0.15}>10-10-2024</Text></Stack></TraySlot>
          <TraySlot $l={11}><svg width="19" height="20" viewBox="0 0 19 20"><path d="M2 14 C4 13 2 4 8 4 L12 5 C14 8 13 13 16 14 V15.500 H1Z M6 17 h6 q-3 4 -6 0z" fill="#1b1b1b" /><path d="M12 1 h5 l-5 5 h5" stroke="#1b1b1b" strokeWidth="1.400" fill="none" /><path d="M7 8 h4 l-4 4.500 h4" stroke="#dbe9f0" strokeWidth="1.200" fill="none" /></svg></TraySlot>
        </Tray>
      </Taskbar>
    </Screen>
  );
}
